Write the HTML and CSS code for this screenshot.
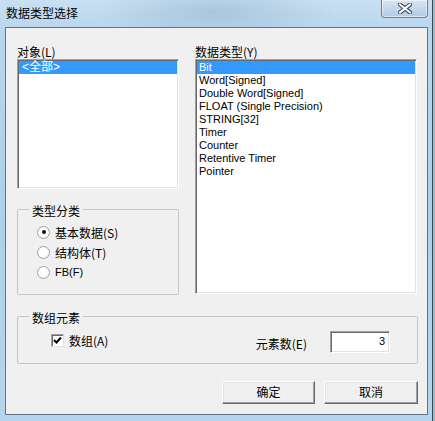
FILE: index.html
```html
<!DOCTYPE html>
<html lang="zh">
<head>
<meta charset="utf-8">
<title>数据类型选择</title>
<link rel="stylesheet" href="styles.css">
</head>
<body>
<div class="window">
  <div class="titlebar">
    <span class="title">数据类型选择</span>
    <div class="close">
      <svg width="14" height="11" viewBox="0 0 14 11">
        <path d="M2 1.5 L12 9.5 M12 1.5 L2 9.5" stroke="#3b4859" stroke-width="4.2" stroke-linecap="square" fill="none"/>
        <path d="M2 1.5 L12 9.5 M12 1.5 L2 9.5" stroke="#ffffff" stroke-width="2" stroke-linecap="square" fill="none"/>
      </svg>
    </div>
  </div>
  <div class="client">
    <div class="top">
      <div class="col-left">
        <div class="label">对象(L)</div>
        <div class="listbox obj">
          <div class="item sel cjk">&lt;全部&gt;</div>
        </div>
        <fieldset class="group kind">
          <legend>类型分类</legend>
          <div class="radio"><span class="circle on"></span><span>基本数据(S)</span></div>
          <div class="radio"><span class="circle"></span><span>结构体(T)</span></div>
          <div class="radio"><span class="circle"></span><span class="small">FB(F)</span></div>
        </fieldset>
      </div>
      <div class="col-right">
        <div class="label">数据类型(Y)</div>
        <div class="listbox types">
          <div class="item sel">Bit</div>
          <div class="item">Word[Signed]</div>
          <div class="item">Double Word[Signed]</div>
          <div class="item">FLOAT (Single Precision)</div>
          <div class="item">STRING[32]</div>
          <div class="item">Timer</div>
          <div class="item">Counter</div>
          <div class="item">Retentive Timer</div>
          <div class="item">Pointer</div>
        </div>
      </div>
    </div>
    <fieldset class="group array">
      <legend>数组元素</legend>
      <div class="array-row">
        <div class="check-wrap">
          <span class="checkbox">
            <svg width="9" height="9" viewBox="0 0 9 9"><path d="M1 4 L3.5 6.5 L8 1.5" stroke="#000" stroke-width="2" fill="none"/></svg>
          </span>
          <span>数组(A)</span>
        </div>
        <div class="count">
          <span class="count-label">元素数(E)</span>
          <div class="input">3</div>
        </div>
      </div>
    </fieldset>
    <div class="buttons">
      <div class="btn ok">确定</div>
      <div class="btn cancel">取消</div>
    </div>
  </div>
</div>
</body>
</html>
```

FILE: styles.css
```css
html, body {
  margin: 0;
  padding: 0;
}
body {
  width: 435px;
  height: 421px;
  overflow: hidden;
  font-family: "Liberation Sans", "Noto Sans CJK SC", sans-serif;
  font-size: 12px;
  color: #000;
}
.window {
  width: 435px;
  height: 421px;
  box-sizing: border-box;
  padding-left: 5px;
  display: flex;
  flex-direction: column;
  background:
    linear-gradient(to right, transparent 432px, #3a4651 432px, #3a4651 433px, #9fb9cb 433px),
    radial-gradient(ellipse 120px 30px at 215px 12px, rgba(150,180,205,0.55), transparent),
    linear-gradient(to bottom, #c9e0f2 0px, #b8d6ee 30px, #aed0ea 200px, #b5d5ed 421px);
}
.titlebar {
  height: 27px;
  display: flex;
  align-items: flex-start;
  margin-right: 7px;
}
.title {
  font-family: "Noto Sans CJK SC", sans-serif;
  font-size: 12px;
  line-height: 14px;
  margin-top: 6px;
  margin-left: 1px;
  color: #000;
}
.close {
  margin-left: auto;
  width: 45px;
  height: 17px;
  border: 1px solid #6b7f93;
  border-top: none;
  border-radius: 0 0 4px 4px;
  background: linear-gradient(to bottom, #d6e6f3, #bfd6e9 60%, #b1cce3);
  box-shadow: inset 0 0 0 1px rgba(255,255,255,0.55);
  display: flex;
  align-items: center;
  justify-content: center;
}
.close svg {
  margin-top: 0px;
}
.client {
  width: 423px;
  height: 388px;
  box-sizing: border-box;
  border: 1px solid #5f7488;
  background: #f0f0f0;
  padding: 17px 0 0 11px;
  display: flex;
  flex-direction: column;
}
.top {
  display: flex;
  gap: 16px;
  align-items: flex-start;
}
.label {
  font-family: "Noto Sans CJK SC", sans-serif;
  font-size: 12px;
  line-height: 14px;
  height: 14px;
}
.col-left {
  width: 162px;
  display: flex;
  flex-direction: column;
}
.col-right {
  width: 222px;
  display: flex;
  flex-direction: column;
}
.listbox {
  box-sizing: border-box;
  background: #fff;
  border: 1px solid;
  border-color: #a0a0a0 #ffffff #ffffff #a0a0a0;
  box-shadow: inset 1px 1px 0 #696969, inset -1px -1px 0 #e3e3e3;
  padding: 1px;
}
.listbox.obj {
  height: 130px;
}
.listbox.types {
  height: 235px;
}
.item {
  height: 13px;
  line-height: 13px;
  font-family: "Liberation Sans", sans-serif;
  font-size: 11px;
  padding-left: 3px;
  white-space: nowrap;
}
.listbox.types .item {
  padding-left: 2px;
}
.item.cjk {
  font-family: "Liberation Sans", "Noto Sans CJK SC", sans-serif;
  font-size: 12px;
}
.item.sel {
  background: #3399ff;
  color: #fff;
}
fieldset.group {
  margin: 0;
  padding: 0;
  min-width: 0;
  border: 1px solid #c6c6c6;
  border-radius: 2px;
  box-sizing: border-box;
}
fieldset.group legend {
  font-family: "Noto Sans CJK SC", sans-serif;
  font-size: 12px;
  line-height: 12px;
  padding: 4px 3px 0;
  margin-left: 11px;
}
.kind {
  margin-top: 12px !important;
  height: 94px;
  padding-top: 5px !important;
}
.radio {
  height: 20px;
  display: flex;
  align-items: center;
  padding-left: 19px;
  font-family: "Noto Sans CJK SC", sans-serif;
  font-size: 12px;
}
.radio .small {
  font-family: "Liberation Sans", sans-serif;
  font-size: 11px;
}
.circle {
  width: 11px;
  height: 11px;
  border-radius: 50%;
  border: 1px solid #a3a3a3;
  background: radial-gradient(circle at 45% 45%, #ffffff 40%, #e8e8e8 100%);
  margin-right: 5px;
  position: relative;
  box-sizing: content-box;
}
.circle.on::after {
  content: "";
  position: absolute;
  left: 3.5px;
  top: 3.5px;
  width: 4px;
  height: 4px;
  border-radius: 50%;
  background: #111;
}
.array {
  margin-top: 13px !important;
  width: 401px;
  height: 56px;
}
.array-row {
  display: flex;
  align-items: flex-start;
  padding-top: 7px;
}
.check-wrap {
  display: flex;
  align-items: center;
  margin-left: 33px;
  margin-top: 1px;
  height: 16px;
  font-family: "Noto Sans CJK SC", sans-serif;
  font-size: 12px;
}
.checkbox {
  width: 11px;
  height: 11px;
  background: #fff;
  border: 1px solid;
  border-color: #a0a0a0 #e3e3e3 #e3e3e3 #a0a0a0;
  box-shadow: inset 1px 1px 0 #696969;
  display: flex;
  align-items: center;
  justify-content: center;
  margin-right: 5px;
}
.count {
  margin-left: auto;
  margin-right: 27px;
  display: flex;
  align-items: center;
}
.count-label {
  font-family: "Noto Sans CJK SC", sans-serif;
  font-size: 12px;
  margin-top: 3px;
  margin-right: 23px;
}
.input {
  width: 60px;
  height: 22px;
  box-sizing: border-box;
  background: #fff;
  border: 1px solid;
  border-color: #a0a0a0 #ffffff #ffffff #a0a0a0;
  box-shadow: inset 1px 1px 0 #696969, inset -1px -1px 0 #e3e3e3;
  font-family: "Liberation Sans", sans-serif;
  font-size: 11px;
  line-height: 18px;
  text-align: right;
  padding-right: 4px;
}
.buttons {
  display: flex;
  gap: 9px;
  margin-top: 17px;
  margin-left: 205px;
}
.btn {
  height: 23px;
  box-sizing: border-box;
  background: #f0f0f0;
  border: 1px solid;
  border-color: #ffffff #696969 #696969 #ffffff;
  box-shadow: inset -1px -1px 0 #a0a0a0, inset 1px 1px 0 #e3e3e3;
  font-family: "Noto Sans CJK SC", sans-serif;
  font-size: 12px;
  line-height: 20px;
  text-align: center;
}
.btn.ok {
  width: 93px;
}
.btn.cancel {
  width: 94px;
}
```
